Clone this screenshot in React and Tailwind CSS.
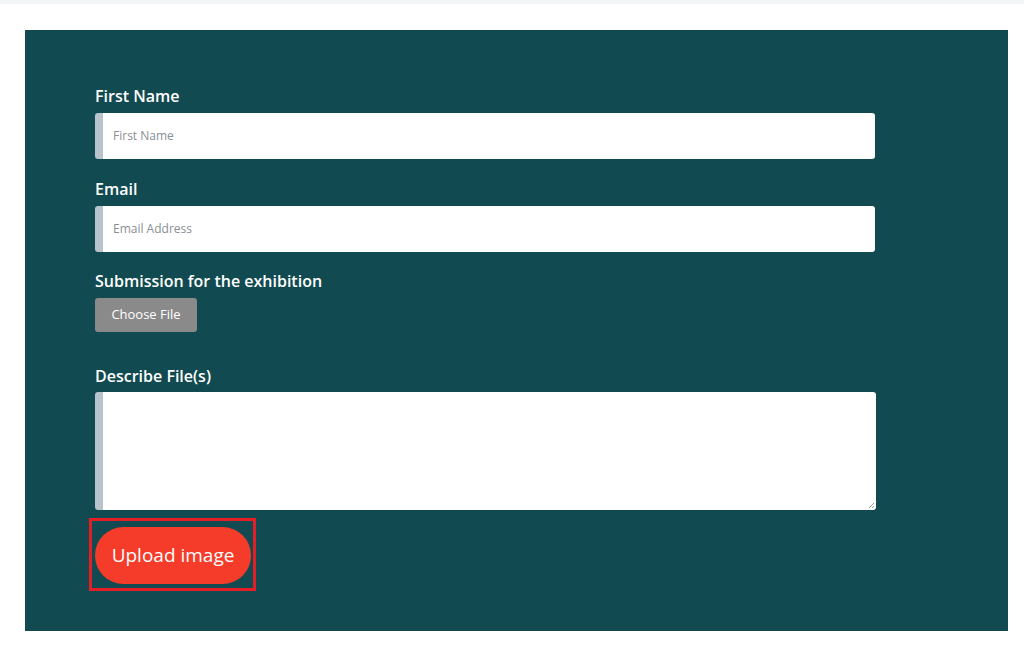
export default function App() {
  return (
    <div className="w-[1024px] h-[658px] bg-white font-['Open_Sans',sans-serif] overflow-hidden">
      <div className="h-[4px] bg-[#f3f6f6]" />
      <div className="pt-[26px] pl-[25px]">
        <form className="w-[983px] h-[601px] bg-[#114a50] pt-[54px] pl-[70px] flex flex-col">
          <label className="text-white text-[16px] font-semibold leading-[24px] mb-[5px]">First Name</label>
          <div className="w-[780px] h-[46px] bg-white rounded-[3px] border-l-[8px] border-[#b9c3cc] flex items-center pl-[10px]">
            <span className="text-[12px] text-[#8a8f94]">First Name</span>
          </div>

          <label className="text-white text-[16px] font-semibold leading-[24px] mt-[18px] mb-[5px]">Email</label>
          <div className="w-[780px] h-[46px] bg-white rounded-[3px] border-l-[8px] border-[#b9c3cc] flex items-center pl-[10px]">
            <span className="text-[12px] text-[#8a8f94]">Email Address</span>
          </div>

          <label className="text-white text-[16px] font-semibold leading-[24px] mt-[17px] mb-[5px]">Submission for the exhibition</label>
          <button type="button" className="w-[102px] h-[34px] bg-[#8a8a8a] rounded-[3px] text-white text-[13px]">
            Choose File
          </button>

          <label className="text-white text-[16px] font-semibold leading-[24px] mt-[32px] mb-[4px]">Describe File(s)</label>
          <div className="relative w-[781px] h-[118px] bg-white rounded-[3px] border-l-[8px] border-[#b9c3cc]">
            <svg className="absolute right-[1px] bottom-[1px]" width="8" height="8" viewBox="0 0 8 8">
              <path d="M7 2L2 7M7 5L5 7" stroke="#999" strokeWidth="1" />
            </svg>
          </div>

          <div className="mt-[8px] -ml-[6px] w-[167px] h-[73px] border-[3px] border-[#e41e25] flex items-center pl-[3px]">
            <button type="button" className="w-[156px] h-[57px] mt-[1px] rounded-full bg-[#f53b2a] text-white text-[19px]">
              Upload image
            </button>
          </div>
        </form>
      </div>
    </div>
  );
}
